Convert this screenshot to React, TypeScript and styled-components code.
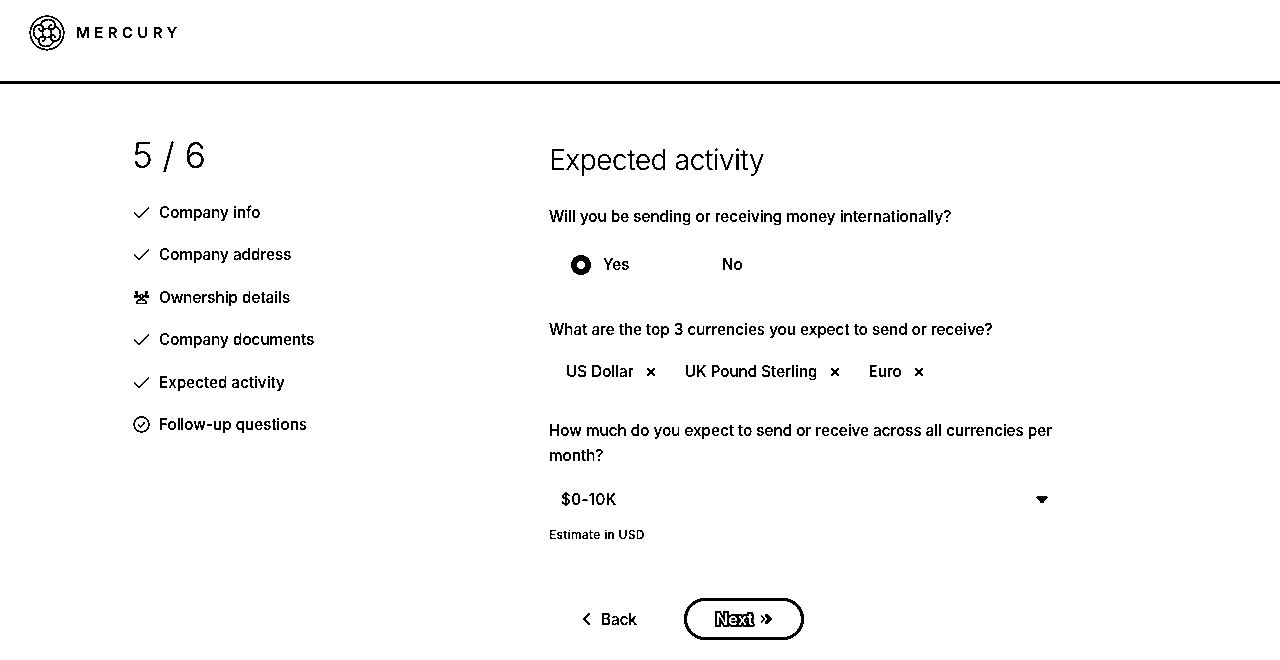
import React from "react";
import styled, { createGlobalStyle } from "styled-components";

const Global = createGlobalStyle`
  html, body { margin: 0; padding: 0; background: #fff; }
  body { font-family: Inter, "Liberation Sans", sans-serif; color: #000; overflow: hidden; }
  * { box-sizing: border-box; }
`;
const Page = styled.div`width: 1280px; height: 660px; display: flex; flex-direction: column; overflow: hidden; background: #fff; filter: grayscale(1) brightness(0.8) contrast(40);`;
const Header = styled.header`height: 84px; flex: none; border-bottom: 3px solid #000; display: flex; align-items: flex-start; padding: 15px 0 0 29px; gap: 11px;`;
const Wordmark = styled.span`font-size: 15px; font-weight: 600; letter-spacing: 4.4px; line-height: 36px;`;
const Main = styled.main`flex: 1; display: flex; padding: 0 0 0 132px;`;
const Sidebar = styled.aside`width: 417px; flex: none; padding-top: 49px;`;
const Counter = styled.div`font-size: 35px; line-height: 44px; font-weight: 300; margin-bottom: 14px;`;
const Steps = styled.ul`list-style: none; margin: 0 0 0 1px; padding: 0; display: flex; flex-direction: column;`;
const Step = styled.li`height: 42.5px; display: flex; align-items: center; gap: 9px; font-size: 15.25px; font-weight: 450;`;
const Content = styled.section`width: 512px; padding-top: 58px;`;
const Title = styled.h1`margin: 0 0 26px; font-size: 27.9px; line-height: 36px; font-weight: 350; letter-spacing: -0.35px;`;
const Label = styled.div`font-size: 15.25px; line-height: 25px; font-weight: 450;`;
const Radios = styled.div`display: flex; margin: 23px 0 0 22px; height: 25px; align-items: center;`;
const Radio = styled.div<{ $w: number }>`width: ${p => p.$w}px; display: flex; align-items: center; gap: 12px; font-size: 15.25px; font-weight: 450;`;
const Dot = styled.span`width: 20px; height: 20px; border-radius: 50%; border: 6.5px solid #000;`;
const Gap = styled.div<{ $h: number }>`height: ${p => p.$h}px;`;
const Tags = styled.div`display: flex; padding-left: 17px; gap: 29px; margin-top: 17px; height: 25px; align-items: center;`;
const Tag = styled.span`display: flex; align-items: center; gap: 12px; font-size: 15.25px; font-weight: 450;`;
const Select = styled.div`height: 25px; margin-top: 19px; padding: 0 13px 0 12px; display: flex; align-items: center; justify-content: space-between; font-size: 15.25px; font-weight: 450; letter-spacing: 0.35px;`;
const Hint = styled.div`margin-top: 15px; font-size: 12px; line-height: 16px; font-weight: 500; letter-spacing: 0.3px;`;
const Actions = styled.div`display: flex; align-items: center; margin: 55px 0 0 33px;`;
const BackBtn = styled.button`all: unset; width: 102px; display: flex; align-items: center; gap: 10px; font-size: 15.25px; font-weight: 450;`;
const NextBtn = styled.button`all: unset; box-sizing: border-box; width: 120px; height: 42px; border: 3px solid #000; border-radius: 21px; display: flex; align-items: center; justify-content: center; gap: 7px; font-size: 16.5px; font-weight: 600; color: #fff; -webkit-text-stroke: 3.5px #000; paint-order: stroke fill;`;

const Logo = () => (
  <svg width="36" height="36" viewBox="0 0 36 36" fill="none" stroke="#000" strokeWidth="1.6">
    <circle cx="18" cy="18" r="16.7" />
    <circle cx="18" cy="18" r="4.500" />
    <path d="M12 9c2-5 10-6 13-2s0 8-3 7-2-4 1-4" />
    <path d="M27 12c5 2 6 10 2 13s-8 0-7-3 4-2 4 1" />
    <path d="M24 27c-2 5-10 6-13 2s0-8 3-7 2 4-1 4" />
    <path d="M9 24c-5-2-6-10-2-13s8 0 7 3-4 2-4-1" />
  </svg>
);
const Check = () => (
  <svg width="17" height="13" viewBox="0 0 17 13" fill="none" stroke="#000" strokeWidth="1.600"><path d="M1 6.500l5 5L16 1.500" /></svg>
);
const People = () => (
  <svg width="17" height="15" viewBox="0 0 17 15" fill="#000">
    <circle cx="3.500" cy="2.500" r="1.800" /><circle cx="13.500" cy="2.500" r="1.800" />
    <path d="M0.500 7.500c0-2 1.500-3 3-3s2.500.6 3 1.600L5 7.500zM16.500 7.500c0-2-1.500-3-3-3s-2.500.6-3 1.600L12 7.500z" />
    <circle cx="8.500" cy="6.500" r="1.800" fill="none" stroke="#000" strokeWidth="1.300" />
    <path d="M3.500 13.500c0-3 2-4 5-4s5 1 5 4z" fill="none" stroke="#000" strokeWidth="1.300" />
  </svg>
);
const CircleCheck = () => (
  <svg width="17" height="17" viewBox="0 0 17 17" fill="none" stroke="#000" strokeWidth="1.400"><circle cx="8.500" cy="8.500" r="7.500" /><path d="M5 8.500l2.500 2.500 4.500-5" /></svg>
);
const X = () => (
  <svg width="10" height="10" viewBox="0 0 10 10" fill="none" stroke="#000" strokeWidth="1.200"><path d="M1 1l8 8M9 1L1 9" /></svg>
);
const Caret = () => (
  <svg width="12" height="8" viewBox="0 0 12 8" fill="#000"><path d="M0 1.500Q0 .5 1 .5h10q1 0 1 1L6.500 7.500h-1z" /></svg>
);
const Chevron = () => (
  <svg width="9" height="14" viewBox="0 0 9 14" fill="none" stroke="#000" strokeWidth="1.300"><path d="M8 1L2 7l6 6" /></svg>
);
const NextArrow = () => (
  <svg width="12" height="14" viewBox="0 0 12 14" fill="none" stroke="#000"><path d="M1 3.500L4.500 7 1 10.500" strokeWidth="1.600" /><path d="M5.500 2.500L10 7l-4.500 4.500" strokeWidth="2.800" /></svg>
);

const steps: [React.ReactNode, string][] = [
  [<Check />, "Company info"], [<Check />, "Company address"], [<People />, "Ownership details"],
  [<Check />, "Company documents"], [<Check />, "Expected activity"], [<CircleCheck />, "Follow-up questions"],
];

export default function App() {
  return (
    <Page>
      <Global />
      <Header><Logo /><Wordmark>MERCURY</Wordmark></Header>
      <Main>
        <Sidebar>
          <Counter>5 / 6</Counter>
          <Steps>{steps.map(([icon, label]) => <Step key={label}>{icon}{label}</Step>)}</Steps>
        </Sidebar>
        <Content>
          <Title>Expected activity</Title>
          <Label>Will you be sending or receiving money internationally?</Label>
          <Radios>
            <Radio $w={151}><Dot />Yes</Radio>
            <Radio $w={60}>No</Radio>
          </Radios>
          <Gap $h={40} />
          <Label>What are the top 3 currencies you expect to send or receive?</Label>
          <Tags>
            <Tag>US Dollar <X /></Tag>
            <Tag>UK Pound Sterling <X /></Tag>
            <Tag>Euro <X /></Tag>
          </Tags>
          <Gap $h={34} />
          <Label>How much do you expect to send or receive across all currencies per month?</Label>
          <Select>$0-10K <Caret /></Select>
          <Hint>Estimate in USD</Hint>
          <Actions>
            <BackBtn><Chevron />Back</BackBtn>
            <NextBtn>Next <NextArrow /></NextBtn>
          </Actions>
        </Content>
      </Main>
    </Page>
  );
}
